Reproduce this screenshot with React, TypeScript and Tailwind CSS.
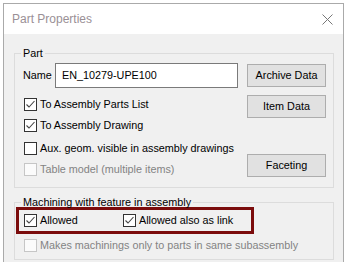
import type { ReactNode } from "react";

type CheckProps = {
  label: string;
  checked?: boolean;
  disabled?: boolean;
  className?: string;
};

function Check({ label, checked = false, disabled = false, className = "" }: CheckProps) {
  return (
    <div className={`flex h-[13px] items-center ${className}`}>
      <span
        className={`ml-[1px] flex h-[13px] w-[13px] shrink-0 items-center justify-center border ${
          disabled ? "border-[#c6c6c6] bg-[#fbfbfb]" : "border-[#333] bg-white"
        }`}
      >
        {checked && (
          <svg width="11" height="11" viewBox="0 0 11 11">
            <polyline points="1.5,5.5 4,8 9.5,2" fill="none" stroke="#444" strokeWidth="1.1" />
          </svg>
        )}
      </span>
      <span className={`ml-[3px] whitespace-nowrap ${disabled ? "text-[#838383]" : "text-black"}`}>
        {label}
      </span>
    </div>
  );
}

function Button({ children, className = "" }: { children: ReactNode; className?: string }) {
  return (
    <div
      className={`flex h-[23px] w-[79px] items-center justify-center border border-[#adadad] bg-[#e1e1e1] text-black ${className}`}
    >
      {children}
    </div>
  );
}

function Group({ title, children, className = "" }: { title: string; children: ReactNode; className?: string }) {
  return (
    <fieldset className={`w-[320px] border border-[#dcdcdc] ${className}`}>
      <legend className="ml-[6px] px-[2px] leading-[15px] text-black">{title}</legend>
      {children}
    </fieldset>
  );
}

export default function App() {
  return (
    <div
      className="h-[262px] w-[346px] overflow-hidden bg-white pl-[3px] pt-[3px] text-[10.8px]"
      style={{ fontFamily: '"Liberation Sans", Arial, sans-serif' }}
    >
      <div className="h-[270px] w-[341px] border border-b-0 border-[#aaaaaa] bg-[#f0f0f0]">
        {/* title bar */}
        <div className="flex h-[30px] items-center justify-between bg-white pl-[8px] pr-[8px]">
          <span className="text-[12px] text-[#9a9096]">Part Properties</span>
          <svg width="11" height="11" viewBox="0 0 11 11" className="mr-[2px]">
            <path d="M0.5 0.5 L10.5 10.5 M10.5 0.5 L0.5 10.5" stroke="#777" strokeWidth="1" />
          </svg>
        </div>

        <div className="pl-[10px] pr-[9px]">
          <Group title="Part" className="mt-[12px] pb-[10px]">
            <div className="flex pl-[8px] pr-[7px]">
              <div className="flex flex-1 flex-col">
                <div className="mt-[2px] flex h-[25px] items-center">
                  <span className="w-[32px]">Name</span>
                  <div className="flex h-[25px] w-[183px] items-center border border-[#7a7a7a] bg-white pl-[6px]">
                    EN_10279-UPE100
                  </div>
                </div>
                <Check className="mt-[10px]" label="To Assembly Parts List" checked />
                <Check className="mt-[8px]" label="To Assembly Drawing" checked />
                <Check className="mt-[10px]" label="Aux. geom. visible in assembly drawings" />
                <Check className="mt-[8px]" label="Table model (multiple items)" disabled />
              </div>
              <div className="flex flex-col">
                <Button className="mt-[3px]">Archive Data</Button>
                <Button className="mt-[8px]">Item Data</Button>
                <Button className="mt-[36px]">Faceting</Button>
              </div>
            </div>
          </Group>

          <Group title="Machining with feature in assembly" className="mt-[7px] pb-[7px]">
            <div className="-mt-[3px] ml-[1px] flex h-[27px] w-[238px] items-center border-[3px] border-[#7b0c0c] pl-[4px]">
              <Check className="w-[99px]" label="Allowed" checked />
              <Check label="Allowed also as link" checked />
            </div>
            <div className="pl-[8px]">
              <Check className="mt-[5px]" label="Makes machinings only to parts in same subassembly" disabled />
            </div>
          </Group>
        </div>
      </div>
    </div>
  );
}
